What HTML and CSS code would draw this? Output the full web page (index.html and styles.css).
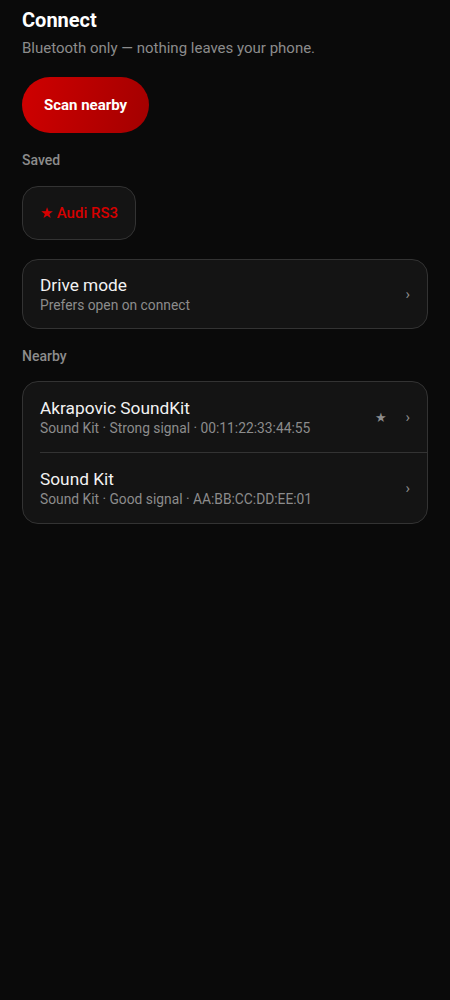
FILE: index.html
```html
<!DOCTYPE html>
<html>
<head>
<meta charset="utf-8">
<link rel="stylesheet" href="styles.css">
</head>
<body>
<main class="page">
  <h1 class="title">Connect</h1>
  <p class="subtitle">Bluetooth only — nothing leaves your phone.</p>
  <button class="scan">Scan nearby</button>

  <h2 class="section">Saved</h2>
  <div class="chips">
    <div class="chip">★ Audi RS3</div>
  </div>

  <div class="card row">
    <div class="row-text">
      <div class="row-title">Drive mode</div>
      <div class="row-sub">Prefers open on connect</div>
    </div>
    <span class="chev">›</span>
  </div>

  <h2 class="section">Nearby</h2>
  <div class="card list">
    <div class="row">
      <div class="row-text">
        <div class="row-title">Akrapovic SoundKit</div>
        <div class="row-sub">Sound Kit · Strong signal · 00:11:22:33:44:55</div>
      </div>
      <span class="star">★</span>
      <span class="chev">›</span>
    </div>
    <div class="divider"></div>
    <div class="row">
      <div class="row-text">
        <div class="row-title">Sound Kit</div>
        <div class="row-sub">Sound Kit · Good signal · AA:BB:CC:DD:EE:01</div>
      </div>
      <span class="chev">›</span>
    </div>
  </div>
</main>
</body>
</html>
```

FILE: styles.css
```css
html, body {
  margin: 0;
  padding: 0;
  background: #0a0a0a;
  font-family: Roboto, "Noto Sans", sans-serif;
  color: #fff;
}
.page {
  padding: 8px 22px 0 22px;
  display: flex;
  flex-direction: column;
}
.title {
  margin: 0;
  font-size: 20px;
  font-weight: 700;
  line-height: 24px;
}
.subtitle {
  margin: 5px 0 0 0;
  font-size: 15px;
  line-height: 22px;
  color: #8c8c8c;
}
.scan {
  align-self: flex-start;
  margin-top: 18px;
  height: 56px;
  padding: 0 22px;
  border: none;
  border-radius: 28px;
  background: linear-gradient(100deg, #cf0000 0%, #a30000 100%);
  color: #fff;
  font-family: Roboto, "Noto Sans", sans-serif;
  font-size: 15px;
  font-weight: 700;
}
.section {
  margin: 18px 0 0 0;
  font-size: 14px;
  font-weight: 500;
  line-height: 18px;
  color: #8c8c8c;
}
.chips {
  display: flex;
  margin-top: 17px;
}
.chip {
  height: 52px;
  padding: 0 17px;
  display: flex;
  align-items: center;
  border: 1px solid #333;
  border-radius: 16px;
  background: #141414;
  color: #d60000;
  font-size: 15px;
  font-weight: 500;
}
.card {
  background: #141414;
  border: 1px solid #333;
  border-radius: 16px;
}
.card.row {
  margin-top: 19px;
}
.row {
  display: flex;
  align-items: center;
  padding: 14px 17px;
}
.row-text {
  flex: 1;
  display: flex;
  flex-direction: column;
}
.row-title {
  font-size: 17.3px;
  line-height: 22px;
  color: #f2f2f2;
}
.row-sub {
  font-size: 13.8px;
  line-height: 18px;
  color: #8c8c8c;
}
.chev {
  color: #8c8c8c;
  font-size: 15px;
  width: 8px;
  text-align: right;
}
.star {
  color: #8c8c8c;
  font-size: 13px;
  margin-right: 15px;
}
.list {
  margin-top: 16px;
}
.list .row {
  padding: 15px 17px;
}
.divider {
  height: 1px;
  background: #333;
  margin-left: 17px;
}
```
